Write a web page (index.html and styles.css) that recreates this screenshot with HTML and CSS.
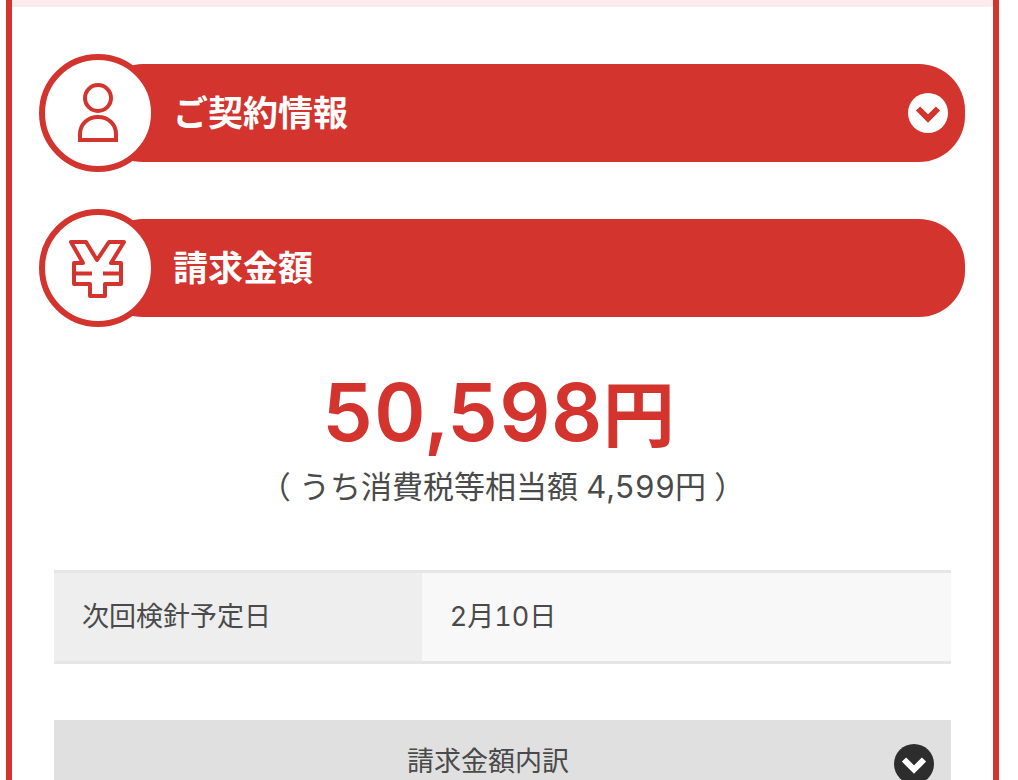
FILE: index.html
```html
<!DOCTYPE html>
<html lang="ja">

<head>
    <meta charset="UTF-8">
    <meta name="viewport" content="width=device-width, initial-scale=1.0">
    <title>請求金額</title>
    <link rel="stylesheet" href="styles.css">
</head>

<body>
    <main class="bill">
        <div class="bill-top"></div>

        <!-- ご契約情報 -->
        <h2 class="heading">
            <span class="heading-icon">
                <svg width="60" height="60" viewBox="0 0 60 60" fill="none" stroke="#d4342e" stroke-width="4">
                    <circle cx="30" cy="15" r="13" />
                    <path d="M12 57V51C12 41 20 34 30 34S48 41 48 51V57Z" />
                </svg>
            </span>
            <button class="bar" type="button" aria-expanded="false">
                <span>ご契約情報</span>
                <svg class="arrow" width="40" height="40" viewBox="0 0 40 40" fill="none">
                    <circle cx="20" cy="20" r="20" fill="#fff" />
                    <path d="M10 15.500L20 25.500L30 15.500" stroke="#d4342e" stroke-width="6" />
                </svg>
            </button>
        </h2>

        <!-- 請求金額 -->
        <h2 class="heading">
            <span class="heading-icon">
                <svg width="60" height="60" viewBox="0 0 60 60" fill="none" stroke="#d4342e" stroke-width="4" stroke-linejoin="round">
                    <path d="M3 4H18L29 22L41 4H56L43 25H53V46H37V58H22V46H6V25H15Z" />
                    <path d="M6 35.500H24M35 35.500H53" />
                </svg>
            </span>
            <div class="bar">
                <span>請求金額</span>
            </div>
        </h2>

        <p class="price">50,598<span class="yen">円</span></p>
        <p class="tax">（ うち消費税等相当額 4,599円 ）</p>

        <table class="info">
            <tr>
                <th scope="row">次回検針予定日</th>
                <td>2月10日</td>
            </tr>
        </table>

        <button class="detail" type="button" aria-expanded="false">
            <span class="detail-text">請求金額内訳</span>
            <svg class="arrow" width="40" height="40" viewBox="0 0 40 40" fill="none">
                <circle cx="20" cy="20" r="20" fill="#2d2d2d" />
                <path d="M10 15.500L20 25.500L30 15.500" stroke="#fff" stroke-width="6" />
            </svg>
        </button>
    </main>
</body>

</html>
```

FILE: styles.css
```css
* {
    box-sizing: border-box;
}

body {
    margin: 0;
    padding: 0 19px 0 6px;
    height: 100vh;
    overflow: hidden;
    background: #fff;
    color: #4a4a4a;
    font-family: Inter, "Noto Sans CJK JP", sans-serif;
    font-variant-numeric: tabular-nums;
}

button {
    border: none;
    font-family: inherit;
    cursor: pointer;
}

.bill {
    border: 6px solid #d4342e;
    border-top: none;
    border-bottom: none;
}

.bill-top {
    height: 7px;
    margin-bottom: 47px;
    background: #fcebec;
}

/* 見出し */

.heading {
    display: flex;
    align-items: center;
    margin: 0 28px 37px 27px;
}

.heading-icon {
    display: flex;
    align-items: center;
    justify-content: center;
    flex: none;
    width: 118px;
    height: 118px;
    border: 6px solid #d4342e;
    border-radius: 50%;
    background: #fff;
    z-index: 1;
}

.bar {
    display: flex;
    align-items: center;
    justify-content: space-between;
    flex: 1;
    height: 98px;
    margin-left: -60px;
    padding: 0 17px 0 76px;
    border-radius: 46px;
    background: #d4342e;
    color: #fff;
    font-size: 35px;
    font-weight: 600;
    line-height: 48px;
}

.arrow {
    display: block;
    flex: none;
}

/* 金額 */

.price {
    margin: 0 8px 0 0;
    color: #d4342e;
    font-size: 80px;
    font-weight: 600;
    line-height: 96px;
    text-align: center;
}

.yen {
    font-size: 72px;
}

.tax {
    margin: 0 0 59px;
    font-size: 31px;
    line-height: 48px;
    text-align: center;
}

.info {
    width: calc(100% - 84px);
    margin: 0 42px 56px;
    border-top: 3px solid #e6e6e6;
    border-bottom: 3px solid #e6e6e6;
    border-spacing: 0;
    font-size: 27px;
    line-height: 40px;
    text-align: left;
}

.info th,
.info td {
    padding: 24px 28px;
    font-weight: 400;
}

.info th {
    width: 41%;
    background: #eee;
}

.info td {
    background: #f8f8f8;
}

.detail {
    display: flex;
    align-items: center;
    width: calc(100% - 84px);
    height: 88px;
    margin: 0 42px;
    padding: 0 17px 0 28px;
    background: #e0e0e0;
    color: #4a4a4a;
    font-size: 27px;
    line-height: 28px;
}

.detail-text {
    flex: 1;
    padding-bottom: 4px;
}
```
